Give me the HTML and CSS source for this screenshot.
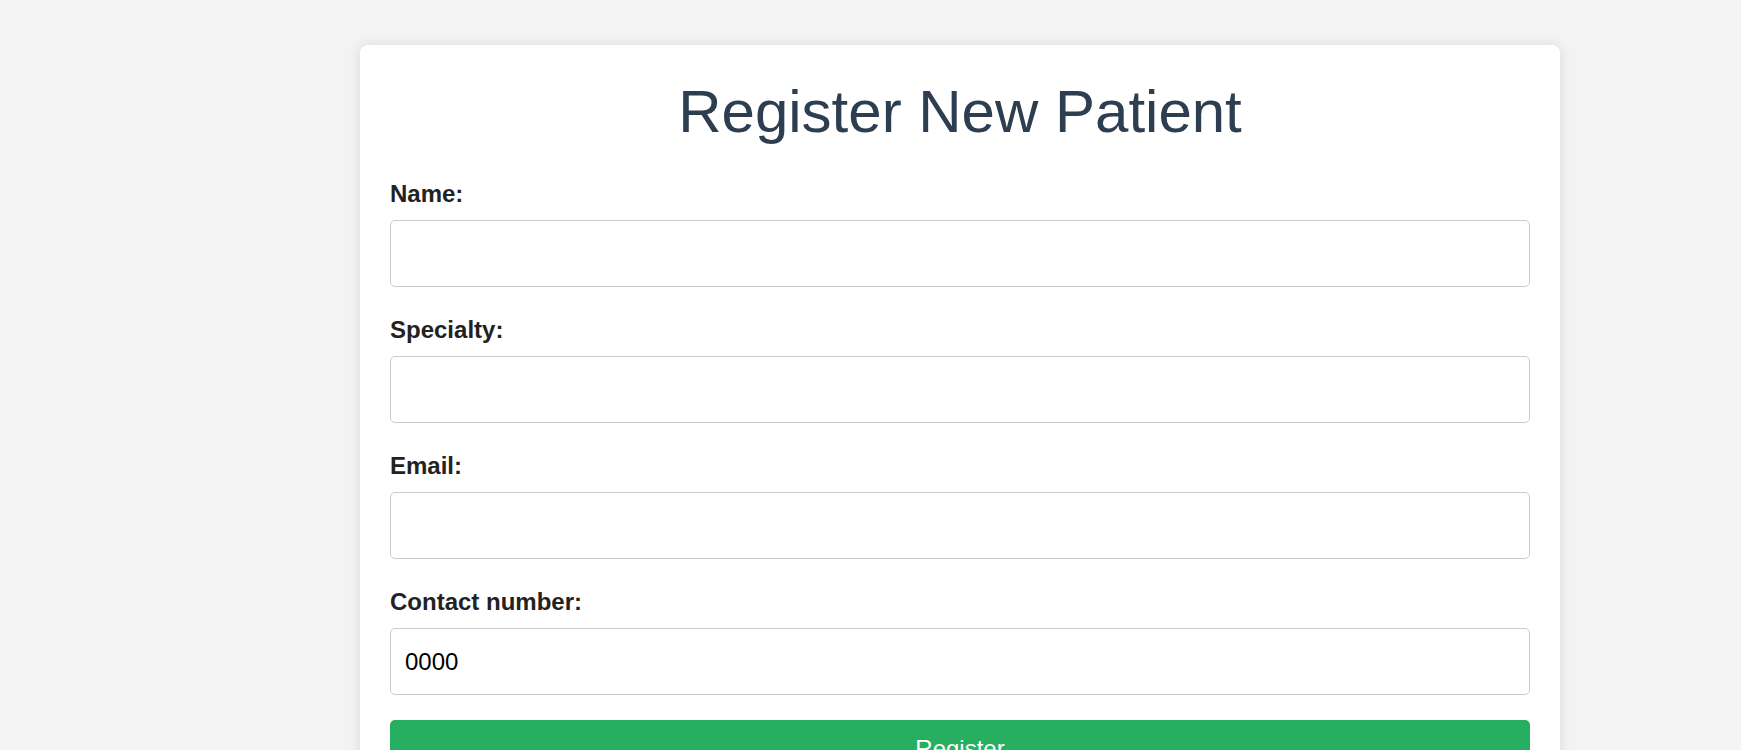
FILE: index.html
```html
<!DOCTYPE html>
<html lang="en">
<head>
<meta charset="utf-8">
<title>Register New Patient</title>
<link rel="stylesheet" href="styles.css">
</head>
<body>
<div class="page">
  <div class="card">
    <h1 class="title">Register New Patient</h1>
    <form class="form">
      <div class="field">
        <label class="label" for="name">Name:</label>
        <input class="input" id="name" type="text">
      </div>
      <div class="field">
        <label class="label" for="specialty">Specialty:</label>
        <input class="input" id="specialty" type="text">
      </div>
      <div class="field">
        <label class="label" for="email">Email:</label>
        <input class="input" id="email" type="email">
      </div>
      <div class="field">
        <label class="label" for="contact">Contact number:</label>
        <input class="input" id="contact" type="text" value="0000">
      </div>
      <button class="button" type="button">Register</button>
    </form>
  </div>
</div>
</body>
</html>
```

FILE: styles.css
```css
html, body {
  margin: 0;
  padding: 0;
  background: #f3f3f3;
  font-family: "Liberation Sans", Arial, sans-serif;
}

.page {
  padding: 45px 0 40px 360px;
}

.card {
  width: 1200px;
  box-sizing: border-box;
  background: #ffffff;
  border-radius: 8px;
  box-shadow: 0 0 12px rgba(0, 0, 0, 0.1);
  padding: 32px 30px 30px;
}

.title {
  margin: 0 0 30px;
  font-size: 60px;
  font-weight: normal;
  line-height: normal;
  color: #2c3e50;
  text-align: center;
}

.form {
  margin: 0;
}

.field {
  padding-top: 4px;
  margin-bottom: 25px;
}

.label {
  display: block;
  margin: 0 0 12px;
  font-size: 24px;
  font-weight: bold;
  line-height: normal;
  color: #222222;
}

.input {
  display: block;
  width: 100%;
  height: 67px;
  box-sizing: border-box;
  margin: 0;
  padding: 0 14px;
  border: 1px solid #cccccc;
  border-radius: 5px;
  font-family: "Liberation Sans", Arial, sans-serif;
  font-size: 24px;
  color: #000000;
  background: #ffffff;
  outline: none;
}

.button {
  display: block;
  width: 100%;
  margin: 0;
  padding: 15px 0;
  border: none;
  border-radius: 5px;
  background: #27ae60;
  color: #ffffff;
  font-family: "Liberation Sans", Arial, sans-serif;
  font-size: 24px;
  line-height: normal;
  cursor: pointer;
}
```
